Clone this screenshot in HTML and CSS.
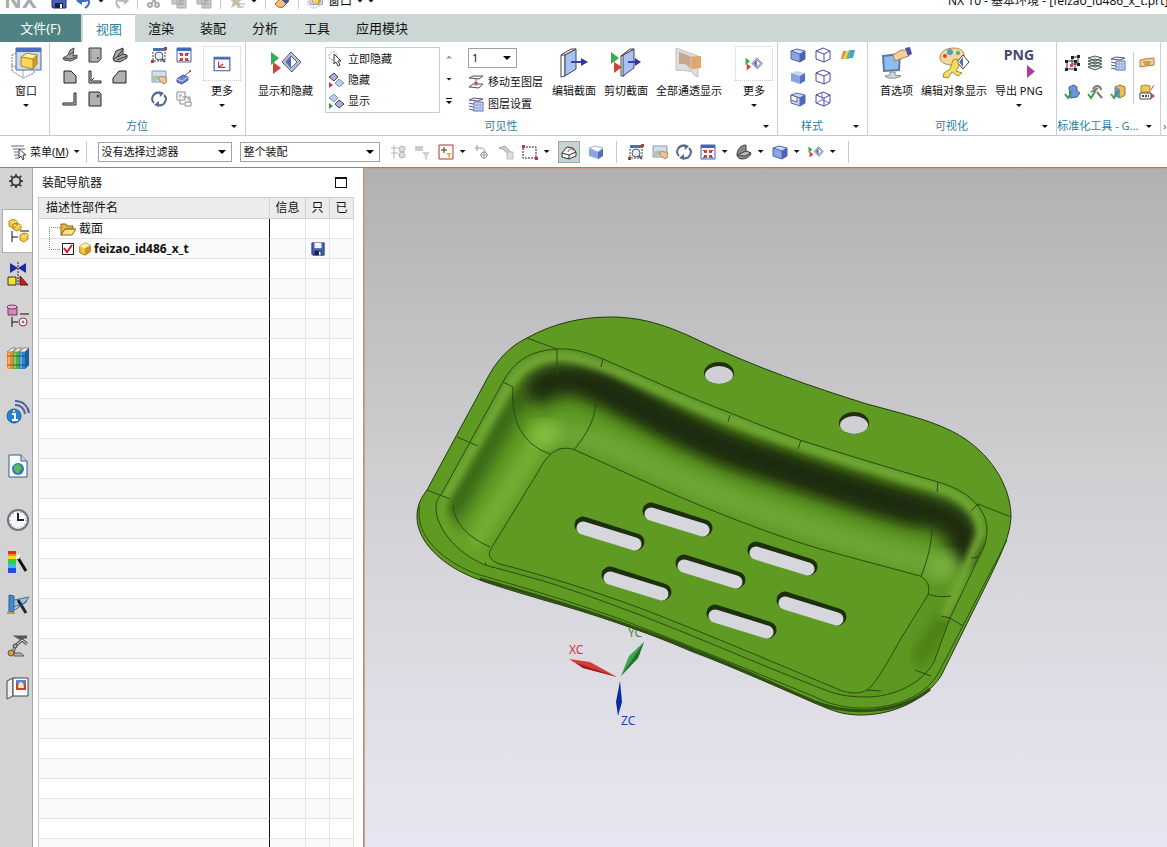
FILE: index.html
```html
<!DOCTYPE html>
<html lang="zh-CN">
<head>
    <meta charset="UTF-8">
    <meta name="viewport" content="width=device-width, initial-scale=1.0">
    <title>NX 10 - 基本环境</title>
    <link rel="stylesheet" href="styles.css">
</head>
<body>
    <svg class="sprite" aria-hidden="true">
        <symbol id="save" viewBox="0 0 16 16"><path d="M1 1h14v14H2l-1-1z" fill="#4a62b8" stroke="#1c2c6c"/><path d="M4 1h8v6H4z" fill="#f4f6ff"/><path d="M4 10h8v5H4z" fill="#15204c"/><path d="M9 11h2v4H9z" fill="#fff"/></symbol>
        <symbol id="undo" viewBox="0 0 16 16"><path d="M3 8h6c6-3 5 4 0 7" fill="none" stroke="#3c6cc8" stroke-width="2"/><path d="M0 8l6-5v9z" fill="#3c6cc8"/></symbol>
        <symbol id="redo" viewBox="0 0 16 16"><path d="M14 8H8C2 5 2 12 7 15" fill="none" stroke="#b8b8b8" stroke-width="2"/><path d="M16 8l-5-5v9z" fill="#b8b8b8"/></symbol>
        <symbol id="cut" viewBox="0 0 16 16"><path d="M5 1l5 9M12 1L6 10" stroke="#aaa" stroke-width="2"/><g fill="none" stroke="#aaa" stroke-width="2"><circle cx="4" cy="12" r="2"/><circle cx="11" cy="12" r="2"/></g></symbol>
        <symbol id="copy" viewBox="0 0 16 16"><path d="M1 1h8v10H1zM6 5h9v10H6z" fill="#c8c8c8" stroke="#aaa"/><path d="M8 8h5M8 11h5" stroke="#999"/></symbol>
        <symbol id="star" viewBox="0 0 16 16"><path d="M7 1l2 5h5l-4 3 2 6-5-3-5 3 2-6-4-3h5z" fill="#c4c0a8"/><path d="M8 11h8M8 14h7" stroke="#aaa"/></symbol>
        <symbol id="brush" viewBox="0 0 16 16"><path d="M1 11l8-8 6 5-6 6c-3 1-6 0-8-3z" fill="#efc46c" stroke="#8a6230"/><path d="M10 3l5 5-3 3-5-5z" fill="#4a4c9c"/></symbol>
        <symbol id="win" viewBox="0 0 32 32"><path d="M2 8l8-4 14 1v21l-11 5-11-7z" fill="#fff" stroke="#777" stroke-dasharray="2 1"/><path d="M1 18l12 5 12-4M13 23v8" stroke="#aaa" fill="none"/><path d="M6 1h25v22H6z" fill="#c9dcf6" stroke="#4967ac"/><path d="M6 1h25v4H6z" fill="#4a70bd"/><path d="M11 10l6-4 10 2-4 4z" fill="#fff2a0"/><path d="M11 10l12 2v10l-12-3z" fill="#f9d65e"/><path d="M23 12l4-4v9l-4 5z" fill="#d59c28"/><path d="M11 10l6-4 10 2v9l-4 5-12-3zM11 10l12 2 4-4M23 12v10" stroke="#b0821c" fill="none"/></symbol>
        <symbol id="iso" viewBox="0 0 16 16"><path d="M1 11l5-3 2-5 4-2-1 8 4-1v3l-6 3-7-1z" fill="#a8a8a8" stroke="#444"/><path d="M2 11l6 1 6-2M7 8l4-3" stroke="#444" fill="none"/></symbol>
        <symbol id="top" viewBox="0 0 16 16"><path d="M2 1h12v11l-3 3H2z" fill="#b4b4b4" stroke="#333"/><circle cx="11" cy="11" r="1" fill="#333"/><path d="M4 2v12" stroke="#888"/></symbol>
        <symbol id="iso2" viewBox="0 0 16 16"><path d="M1 11l3-7 7-3v6l4 1v3l-7 4-6-1z" fill="#a8a8a8" stroke="#333"/><path d="M11 2L6 9l-4 3M6 10l5-3M5 13l10-4" stroke="#333" fill="none"/></symbol>
        <symbol id="front" viewBox="0 0 16 16"><path d="M2 2h7l5 5v7H2z" fill="#b0b0b0" stroke="#222"/></symbol>
        <symbol id="left" viewBox="0 0 16 16"><path d="M2 2h2v10h10v2H2z" fill="#ccc" stroke="#222"/><path d="M5 11l2-2" stroke="#222"/></symbol>
        <symbol id="back" viewBox="0 0 16 16"><path d="M7 2h7v12H1V9z" fill="#b0b0b0" stroke="#222"/></symbol>
        <symbol id="right" viewBox="0 0 16 16"><path d="M12 2h2v12H1v-2h11z" fill="#ccc" stroke="#222"/></symbol>
        <symbol id="bottom" viewBox="0 0 16 16"><path d="M2 1h10l2 2v12H2z" fill="#b0b0b0" stroke="#222"/><circle cx="11" cy="5" r="1" fill="#eee" stroke="#222"/></symbol>
        <symbol id="fit" viewBox="0 0 16 16"><path d="M2 1h13v3H2z" fill="#4870bd"/><path d="M2 5v10M14 5v9M3 14h10" stroke="#444" stroke-dasharray="2 1" fill="none"/><circle cx="8" cy="9" r="4" fill="#e6f1fb" stroke="#556"/><path d="M11 12l3 3" stroke="#556" stroke-width="2"/><path d="M0 13h3v3H0zM13 0h3v3h-3z" fill="#b83a36"/></symbol>
        <symbol id="tile" viewBox="0 0 16 16"><path d="M1 1h14v14H1z" fill="#f4f6ff" stroke="#4864a8"/><path d="M1 1h14v3H1z" fill="#4468b8"/><path d="M4 6h3v3H4zM9 6h3v3H9zM4 11h3v3H4zM9 11h3v3H9z" fill="#d24a44"/><path d="M3 6l2 2M13 6l-2 2M3 14l2-2M13 14l-2-2" stroke="#a22"/></symbol>
        <symbol id="pan" viewBox="0 0 16 16"><path d="M1 2h14v11H1z" fill="#cfe0f2" stroke="#8c9aad"/><path d="M1 8l5-2 4 3-5 3H1z" fill="#b0c6a8"/><path d="M8 8l2-1 2 1 3 0 1 5-3 2-5-4z" fill="#edc497" stroke="#b58957"/></symbol>
        <symbol id="persp" viewBox="0 0 16 16"><path d="M1 10l6-4 5 2v3l-6 4-5-2z" fill="#6d86d4" stroke="#3a4c98"/><path d="M1 10l5 2 6-4" stroke="#c0d0f8" fill="none"/><path d="M9 6l6-4" stroke="#667"/><circle cx="14" cy="2" r="1" fill="#c33"/></symbol>
        <symbol id="rotate" viewBox="0 0 16 16"><path d="M3 12A6 6 0 0 1 9 2M13 4A6 6 0 0 1 7 14" fill="none" stroke="#56688c" stroke-width="2"/><path d="M8 0l5 2-4 4zM8 10l-5 4 5 2z" fill="#56688c"/></symbol>
        <symbol id="copyview" viewBox="0 0 16 16"><path d="M1 1h8v8H1zM4 9v4h4M9 11h6v4H9zM6 6h8v5" fill="none" stroke="#888"/><path d="M3 4h3M3 6h2M11 8h3" stroke="#88a"/></symbol>
        <symbol id="axes" viewBox="0 0 16 16"><path d="M1 2h14v12H1z" fill="#f7f9ff" stroke="#46598f"/><path d="M1 2h14v2H1z" fill="#496bb5"/><path d="M5 6v5h6M5 11l4-3" fill="none" stroke="#c23430"/></symbol>
        <symbol id="showhide" viewBox="0 0 32 32"><path d="M1 5l8 6-8 7z" fill="#35ad4d"/><path d="M3 15l8 6-8 6z" fill="#d04438"/><path d="M21 5l10 10-9 10-10-10z" fill="#b4bed8" stroke="#555e78"/><path d="M21 9l6 6-6 6-5-6z" fill="#fff" stroke="#667"/><path d="M21 9v12l-5-6z" fill="#5668b5"/></symbol>
        <symbol id="hidenow" viewBox="0 0 16 16"><circle cx="5" cy="5" r="4" fill="none" stroke="#999" stroke-dasharray="2 1"/><path d="M6 3v10l2-2 2 4 2-1-2-4h3z" fill="#fff" stroke="#333"/></symbol>
        <symbol id="hide" viewBox="0 0 16 16"><path d="M6 1l4 4-4 4-5-4z" fill="#aab2dc" stroke="#33406c"/><path d="M11 7l5 4-5 4-4-4z" fill="#b8ccee" stroke="#7890c0"/><path d="M1 10l4 3-4 3z" fill="#c33"/></symbol>
        <symbol id="show" viewBox="0 0 16 16"><path d="M6 1l4 4-4 4-5-4z" fill="#b8ccee" stroke="#7890c0"/><path d="M11 7l5 4-5 4-4-4z" fill="#aab2dc" stroke="#33406c"/><path d="M1 10l4 3-4 3z" fill="#2c9c44"/></symbol>
        <symbol id="movelayer" viewBox="0 0 16 16"><path d="M1 4l4-2h10l-4 3zM1 13l4-3h10l-4 4z" fill="#e8f0e4" stroke="#557"/><path d="M8 5v6" stroke="#c44"/><path d="M6 8h4l-2 4z" fill="#c44"/></symbol>
        <symbol id="layers" viewBox="0 0 16 16"><path d="M1 4l5-2 9 1-5 2zM1 7l4 1h10M1 10l4 1h10M1 13l4 1h10" fill="#eef2f8" stroke="#557"/><path d="M6 6h9v9H6z" fill="#dce4fa" stroke="#5a6cb4"/><path d="M6 9h9M6 12h9M9 6v9M12 6v9" stroke="#8a9cd4"/></symbol>
        <symbol id="layers2" viewBox="0 0 16 16"><path d="M1 12l7-2 7 2-7 3zM1 9l7-2 7 2-7 3zM1 6l7-2 7 2-7 3zM1 3l7-2 7 2-7 3z" fill="#e4efe6" stroke="#4a555a"/></symbol>
        <symbol id="section" viewBox="0 0 32 32"><path d="M3 8l4-1v22l-4 1z" fill="#fff" stroke="#444"/><path d="M7 8L18 2v20L7 29z" fill="#a9c2f2" stroke="#3c4868"/><path d="M3 8l10-6h5L7 8z" fill="#eee" stroke="#444"/><path d="M13 15h12" stroke="#3b3fa8" stroke-width="2"/><path d="M23 11l7 4-7 4z" fill="#3434a4"/></symbol>
        <symbol id="clip" viewBox="0 0 32 32"><path d="M11 9l3-1v21h-3z" fill="#fff" stroke="#444"/><path d="M13 8L24 2v19L13 29z" fill="#a9c2f2" stroke="#3c4868"/><path d="M11 9l9-7h4L13 8z" fill="#eee" stroke="#444"/><path d="M18 15h8" stroke="#3b3fa8" stroke-width="2"/><path d="M25 11l6 4-6 4z" fill="#3434a4"/><path d="M1 5l8 6-8 6z" fill="#35ad4d"/><path d="M4 15l8 5-8 6z" fill="#d04438"/></symbol>
        <symbol id="through" viewBox="0 0 32 32"><path d="M3 1l22 8v21l-4-2-3-4-15-1z" fill="#dedede" stroke="#c2c2c2"/><path d="M6 5l8 5 14-1v12l-10 1-6-5H6z" fill="#e1a66b"/><path d="M6 5l11 4v9l-5-1H6z" fill="#c9a88a"/><path d="M3 23l15 1V11" fill="none" stroke="#c8c8c8"/></symbol>
        <symbol id="cube" viewBox="0 0 16 16"><path d="M1 4l6-2 8 2-5 3z" fill="#ccdcfb"/><path d="M1 4l9 3v8l-9-3z" fill="#8ba6e6"/><path d="M10 7l5-3v8l-5 3z" fill="#4a63b4"/><path d="M1 4l6-2 8 2v8l-5 3-9-3zM1 4l9 3 5-3M10 7v8" fill="none" stroke="#5465a8"/></symbol>
        <symbol id="cubesoft" viewBox="0 0 16 16"><path d="M1 4l6-2 8 2-5 3z" fill="#c8d6f5"/><path d="M1 4l9 3v8l-9-3z" fill="#8aa2e0"/><path d="M10 7l5-3v8l-5 3z" fill="#556fc0"/></symbol>
        <symbol id="cubehalf" viewBox="0 0 16 16"><path d="M1 4l6-2 8 2v8l-5 3-9-3z" fill="#c4d4f4" stroke="#5e6c94"/><path d="M1 4l9 3 5-3M10 7v8" fill="none" stroke="#55659a"/><path d="M10 7l5-3v8l-5 3z" fill="#4a68bc"/><path d="M1 4l6 2v5l-6-2z" fill="#fff" stroke="#668"/></symbol>
        <symbol id="wire" viewBox="0 0 16 16"><path d="M1 4l7-3 7 3v8l-6 3-8-3zM1 4l8 3 6-3M9 7v8" fill="#fff" stroke="#4848a4"/></symbol>
        <symbol id="wire2" viewBox="0 0 16 16"><path d="M1 4l7-3 7 3v8l-6 3-8-3zM1 4l8 3 6-3M9 7v8" fill="#fff" stroke="#4848a4"/><path d="M1 12l6-3 8 3M7 2v7" fill="none" stroke="#7878c4"/></symbol>
        <symbol id="rainbow" viewBox="0 0 16 16"><path d="M3 4h4L4 12H1z" fill="#e58a35"/><path d="M6 4h3l-3 8H3z" fill="#ecd44a"/><path d="M9 3h3L9 12H6z" fill="#5cc06c"/><path d="M11 3h4l-2 8H9z" fill="#4a9ee0"/></symbol>
        <symbol id="prefs" viewBox="0 0 32 32"><path d="M2 9l17-2-1 16-15 1z" fill="#8cbcf0" stroke="#6078a4" stroke-width="2"/><path d="M9 25h5v3l6 1-5 2-8 0-3-2 5-1z" fill="#d5d8dc" stroke="#888"/><path d="M12 8l8-5 6 0 2 6-6 2-8 3z" fill="#f1d19a" stroke="#a88452"/><path d="M24 1l5-1 2 7-4 2z" fill="#4c50ac"/></symbol>
        <symbol id="palette" viewBox="0 0 32 32"><path d="M2 11C2 4 9 1 16 1s11 4 10 9c-1 4-5 2-6 5s-4 4-8 3C6 17 2 15 2 11z" fill="#f5d69c" stroke="#a88a55"/><circle cx="7" cy="9" r="2" fill="#d84c44"/><circle cx="12" cy="5" r="3" fill="#48a0d8"/><circle cx="20" cy="6" r="2" fill="#50b058"/><path d="M25 8l6 7-6 7-6-7z" fill="#fff" stroke="#445"/><path d="M25 10v10l-4-5z" fill="#5668b5"/><path d="M19 12l2 7-3 5 6 2-4 3-6-4-4 6-5-1 1-4 6-4 3-9z" fill="#f2dc61" stroke="#a38e34"/></symbol>
        <symbol id="snap" viewBox="0 0 16 16"><path d="M3 6h8v8H3zM8 2h6v7H8z" fill="none" stroke="#333"/><path d="M1 5h3v3H1zM1 13h3v3H1zM10 13h3v3h-3zM7 1h3v3H7zM13 0h3v3h-3zM13 8h3v3h-3zM10 5h3v3h-3z" fill="#222"/><path d="M6 9h3v3H6z" fill="#d44"/></symbol>
        <symbol id="note" viewBox="0 0 16 16"><path d="M1 5l5-1 9-1v7l-8 1-6 1z" fill="#f3cf94" stroke="#b07c3e"/><path d="M4 7h8M5 9h6" stroke="#a36a3a"/></symbol>
        <symbol id="chkcube" viewBox="0 0 16 16"><path d="M5 3l5-2 3 2v4l3 2-3 4-7 1z" fill="#6f95dc" stroke="#3c5ca4"/><path d="M1 10l3 4 4-7" fill="none" stroke="#38a048" stroke-width="2"/></symbol>
        <symbol id="chkarc" viewBox="0 0 16 16"><path d="M6 5c3-5 8-3 8 1M4 8l7-4M10 8l5 6" fill="none" stroke="#777" stroke-width="2"/><path d="M1 10l3 4 5-8" fill="none" stroke="#38a048" stroke-width="2"/></symbol>
        <symbol id="chkbox" viewBox="0 0 16 16"><path d="M5 3l5-2 5 2v8l-5 3-5-2z" fill="#f0bc52" stroke="#9b7428"/><path d="M5 3l5 2v9l-5-2z" fill="#678cd8"/><path d="M1 10l3 4 4-7" fill="none" stroke="#38a048" stroke-width="2"/></symbol>
        <symbol id="plot" viewBox="0 0 16 16"><path d="M2 2l4-1 5 1v6H2z" fill="#f3cb52" stroke="#a38434"/><path d="M1 9h11v6H1z" fill="#fff" stroke="#444"/><path d="M3 12h7" stroke="#444" stroke-width="2" stroke-dasharray="2 1"/><path d="M12 9l4 3-4 3z" fill="#b43ca0"/><path d="M15 1l-3 5" stroke="#a76a34"/></symbol>
        <symbol id="menu" viewBox="0 0 16 16"><path d="M1 2h13M3 5h12M4 8h5M4 11h5M5 14h4" stroke="#667" stroke-width="1"/><path d="M9 5v9l2-2 2 4 1-1-1-4h3z" fill="#fff" stroke="#444"/></symbol>
        <symbol id="g1" viewBox="0 0 16 16"><path d="M4 1v14M1 4h7M1 9h7" stroke="#b4b4b4"/><circle cx="12" cy="5" r="3" fill="#ddd" stroke="#b4b4b4"/><circle cx="12" cy="11" r="3" fill="#ddd" stroke="#b4b4b4"/></symbol>
        <symbol id="g2" viewBox="0 0 16 16"><path d="M1 2h8v5H1z" fill="#ccc"/><path d="M8 8h8l-3 4v4l-2-1v-3z" fill="#d8d0c4"/></symbol>
        <symbol id="g3" viewBox="0 0 16 16"><path d="M1 4h6c4 0 4 3 4 5M3 1v6M10 7v8M6 11h8" fill="none" stroke="#999"/><circle cx="10" cy="11" r="3" fill="none" stroke="#999"/></symbol>
        <symbol id="g4" viewBox="0 0 16 16"><path d="M1 4l6-2 5 5-2 3-4-4z" fill="#ccc" stroke="#aaa"/><path d="M9 8h6v7H9z" fill="#ddd" stroke="#bbb"/></symbol>
        <symbol id="pick" viewBox="0 0 16 16"><path d="M1 1h14v14H1z" fill="#fffaf4" stroke="#a33a3a"/><path d="M3 6h6M6 3v6" stroke="#333"/><path d="M8 9h6l-2 2v3l-2-1v-2z" fill="#efb250"/></symbol>
        <symbol id="marquee" viewBox="0 0 16 16"><path d="M1 3h13v11H1z" fill="none" stroke="#222" stroke-dasharray="2 1"/><path d="M0 1h3v3H0zM13 13h3v3h-3z" fill="#c33"/></symbol>
        <symbol id="edge" viewBox="0 0 16 16"><path d="M1 9l5-6 6 1 3 4v4l-7 3-7-2z" fill="#f6f6f6" stroke="#333"/><path d="M1 9l7 2 7-3M8 11v4" stroke="#333" fill="none"/><path d="M7 8c1-3 3-4 6-2" fill="none" stroke="#c33"/></symbol>
        <symbol id="sheet" viewBox="0 0 16 16"><path d="M1 4l6-2 8 2v8l-5 3-9-3z" fill="#8ba6e6"/><path d="M10 7l5-3v8l-5 3z" fill="#556fc0"/><path d="M1 4l6-2 8 2-5 4z" fill="#fff" stroke="#a4b4dc"/></symbol>
        <symbol id="pie" viewBox="0 0 16 16"><path d="M1 11C1 5 5 1 10 1v6l5 2c-1 4-5 6-9 6-3 0-5-2-5-4z" fill="#888" stroke="#444"/><path d="M1 11l9-4 5 2-6 3z" fill="#bbb" stroke="#444"/></symbol>
        <symbol id="gear" viewBox="0 0 16 16"><circle cx="8" cy="8" r="5" fill="none" stroke="#333" stroke-width="2"/><path d="M8 0v3M8 13v3M0 8h3M13 8h3M2 2l2 2M12 12l2 2M14 2l-2 2M2 14l2-2" stroke="#333" stroke-width="2"/></symbol>
        <symbol id="tree" viewBox="0 0 24 24"><path d="M5 12v11M5 18h6M13 12h9" stroke="#111"/><g fill="#f4c742" stroke="#b5861c"><path d="M2 2l4-2 4 2v5l-4 2-4-2zM6 5l4-1 4 2v4l-4 2-4-2zM13 16l4-2 4 1v5l-4 3-4-2z"/></g><path d="M3 2l3 2 4-2M7 6l3 2 4-2M14 17l3 1 4-3" stroke="#fff0a0" fill="none"/></symbol>
        <symbol id="constraint" viewBox="0 0 24 24"><path d="M4 1l8 5-8 5zM20 1l-8 5 8 5z" fill="#1c2ca4"/><path d="M12 0v24" stroke="#222" stroke-dasharray="2 1"/><path d="M2 15h8v8H2z" fill="#f8e02c" stroke="#333"/><path d="M14 14l8 9h-8z" fill="#c42020" stroke="#611"/></symbol>
        <symbol id="reuse" viewBox="0 0 24 24"><path d="M2 3h9v8H2z" fill="#d28ab8" stroke="#73335c"/><ellipse cx="6" cy="3" rx="5" ry="2" fill="#eab8d8" stroke="#73335c"/><path d="M6 13v10M6 18h6M14 10h9" stroke="#111"/><circle cx="17" cy="18" r="4" fill="#fff" stroke="#83285c"/><circle cx="17" cy="18" r="1" fill="none" stroke="#83285c"/></symbol>
        <symbol id="books" viewBox="0 0 24 24"><path d="M1 6l5-4h4L6 6zM7 6l5-4h4l-4 4zM13 6l5-4h5l-4 4z" fill="#f4f0d8" stroke="#887"/><path d="M1 6h6v17H2l-1-1z" fill="#f0872c"/><path d="M7 6h6v17H7z" fill="#4cb43e"/><path d="M13 6h6l4-4v17l-4 4h-6z" fill="#2f84d4"/><path d="M19 6l4-4v17l-4 4z" fill="#1f5c9c"/><path d="M3 7v15M9 7v15M15 7v15" stroke="#fff" opacity=".6"/><path d="M1 10h6M1 19h6" stroke="#a44e10"/><path d="M7 10h6M7 19h6" stroke="#246c1c"/><path d="M13 10h6M13 19h6" stroke="#124a84"/></symbol>
        <symbol id="info" viewBox="0 0 24 24"><path d="M9 5c6 0 9 3 10 9M9 1c8 0 13 5 14 12" fill="none" stroke="#4c619a" stroke-width="2"/><circle cx="8" cy="16" r="7" fill="#2184d4" stroke="#1c5a98"/><path d="M6 14h3v6M6 20h6" fill="none" stroke="#fff" stroke-width="2"/><circle cx="8" cy="11" r="1" fill="#fff"/></symbol>
        <symbol id="web" viewBox="0 0 24 24"><path d="M3 1h12l6 6v16H3z" fill="#f8fbff" stroke="#3f5a86"/><path d="M15 1v6h6" fill="#c8d8ec" stroke="#3f5a86"/><circle cx="12" cy="15" r="6" fill="#3a72b8"/><path d="M8 11l5-1 3 4-4 6-4-4z" fill="#58b860"/></symbol>
        <symbol id="clock" viewBox="0 0 24 24"><circle cx="12" cy="12" r="10" fill="#f6f8fa" stroke="#6c747c" stroke-width="2"/><circle cx="12" cy="12" r="8" fill="none" stroke="#777" stroke-dasharray="1 3"/><path d="M12 5v7h6" fill="none" stroke="#222" stroke-width="2"/></symbol>
        <symbol id="colors" viewBox="0 0 24 24"><path d="M2 1h8v4H2z" fill="#e62a20"/><path d="M2 4h8v2H2z" fill="#f08c28"/><path d="M2 6h8v3H2z" fill="#f4d82a"/><path d="M2 9h8v5H2z" fill="#38cc38"/><path d="M2 14h8v4H2z" fill="#2bc4dc"/><path d="M2 18h8v5H2z" fill="#2c48d8"/><path d="M12 8l8 13" stroke="#111" stroke-width="3"/><path d="M11 5l3-1-1 5-3 0z" fill="#fff"/></symbol>
        <symbol id="wing" viewBox="0 0 24 24"><path d="M3 3l5 1v15l-5 2z" fill="#468bc8" stroke="#2d5f90"/><path d="M8 8l15-3-4 6-11 4z" fill="#9fc1df" stroke="#4c7095"/><path d="M1 21h8" stroke="#b49c48" stroke-width="2"/><path d="M12 8l8 13" stroke="#182838" stroke-width="3"/><path d="M21 9L9 18" stroke="#35506c"/></symbol>
        <symbol id="robot" viewBox="0 0 24 24"><path d="M7 19l2-7 7-6 5 4M17 6l-5-3h9" fill="none" stroke="#555" stroke-width="3"/><path d="M7 19l2-7 7-6 5 4" fill="none" stroke="#e4e4e4"/><path d="M8 22h10l-3-3H8z" fill="#bbb" stroke="#555"/><circle cx="5" cy="19" r="3" fill="#e9983a" stroke="#555"/><circle cx="9" cy="12" r="2" fill="#aaa" stroke="#444"/></symbol>
        <symbol id="roles" viewBox="0 0 24 24"><path d="M1 5l6-3v18l-6 3z" fill="#eee" stroke="#444"/><path d="M7 2h15v18H7z" fill="#fff" stroke="#444"/><path d="M10 4h10v10H10z" fill="#4f8cd8"/><path d="M10 14V6l4 5h2l4-5v8z" fill="#d83c30"/><path d="M12 12c0-8 6-8 6 0z" fill="#f6e9a8"/></symbol>
        <symbol id="folder" viewBox="0 0 16 16"><path d="M1 3h5l1 2h6v3H5l-3 6H1z" fill="#eab43e" stroke="#8b6414"/><path d="M5 8h11l-4 6H1z" fill="#ffe084" stroke="#8b6414"/></symbol>
        <symbol id="part" viewBox="0 0 16 16"><path d="M2 5l6-4 6 3v7l-6 4-6-3z" fill="#f4c640" stroke="#8c6418"/><path d="M2 5l6-4 6 3-6 3z" fill="#fff0a8"/><path d="M8 7l6-3v7l-6 4z" fill="#cf9428"/></symbol>
    </svg>

    <header class="titlebar">
        <span class="logo">NX</span>
        <button class="quick" aria-label="保存"><svg><use href="#save"/></svg></button>
        <button class="quick" aria-label="撤消"><svg><use href="#undo"/></svg><i class="caret"></i></button>
        <button class="quick" aria-label="重做"><svg><use href="#redo"/></svg></button>
        <span class="quick-sep"></span>
        <button class="quick" aria-label="剪切"><svg><use href="#cut"/></svg></button>
        <button class="quick" aria-label="复制"><svg><use href="#copy"/></svg></button>
        <button class="quick" aria-label="粘贴"><svg><use href="#copy"/></svg></button>
        <span class="quick-sep"></span>
        <button class="quick" aria-label="重复命令"><svg><use href="#star"/></svg><i class="caret"></i></button>
        <span class="quick-sep"></span>
        <button class="quick" aria-label="画笔"><svg><use href="#brush"/></svg></button>
        <span class="quick-sep"></span>
        <button class="quick quick-window"><svg><use href="#win"/></svg>窗口<i class="caret"></i><i class="caret"></i></button>
        <span class="doc-title">NX 10 - 基本环境 - [feizao_id486_x_t.prt]</span>
    </header>

    <nav class="tabs">
        <button class="tab file">文件(F)</button>
        <button class="tab active">视图</button>
        <button class="tab">渲染</button>
        <button class="tab">装配</button>
        <button class="tab">分析</button>
        <button class="tab">工具</button>
        <button class="tab">应用模块</button>
    </nav>

    <section class="ribbon">
        <div class="group group-window">
            <div class="group-body">
                <button class="big"><svg><use href="#win"/></svg>窗口<i class="caret"></i></button>
            </div>
        </div>

        <div class="group group-orient">
            <div class="group-body">
                <div class="icon-grid three">
                    <button aria-label="正三轴测图"><svg><use href="#iso"/></svg></button>
                    <button aria-label="俯视图"><svg><use href="#top"/></svg></button>
                    <button aria-label="正等测图"><svg><use href="#iso2"/></svg></button>
                    <button aria-label="前视图"><svg><use href="#front"/></svg></button>
                    <button aria-label="左视图"><svg><use href="#left"/></svg></button>
                    <button aria-label="后视图"><svg><use href="#back"/></svg></button>
                    <button aria-label="右视图"><svg><use href="#right"/></svg></button>
                    <button aria-label="仰视图"><svg><use href="#bottom"/></svg></button>
                </div>
                <div class="icon-grid two">
                    <button aria-label="缩放"><svg><use href="#fit"/></svg></button>
                    <button aria-label="适合窗口"><svg><use href="#tile"/></svg></button>
                    <button aria-label="平移"><svg><use href="#pan"/></svg></button>
                    <button aria-label="透视"><svg><use href="#persp"/></svg></button>
                    <button aria-label="旋转"><svg><use href="#rotate"/></svg></button>
                    <button aria-label="另存视图"><svg><use href="#copyview"/></svg></button>
                </div>
                <button class="big more"><span class="more-box"><svg><use href="#axes"/></svg></span>更多<i class="caret"></i></button>
            </div>
            <div class="group-title"><span>方位</span><button aria-label="方位选项"><i class="caret"></i></button></div>
        </div>

        <div class="group group-visible">
            <div class="group-body">
                <button class="big"><svg><use href="#showhide"/></svg>显示和隐藏</button>
                <div class="gallery">
                    <button><svg><use href="#hidenow"/></svg>立即隐藏</button>
                    <button><svg><use href="#hide"/></svg>隐藏</button>
                    <button><svg><use href="#show"/></svg>显示</button>
                </div>
                <div class="gallery-scroll">
                    <button aria-label="向上"><i class="caret up"></i></button>
                    <button aria-label="向下"><i class="caret"></i></button>
                    <button aria-label="展开"><i class="caret bar"></i></button>
                </div>
                <div class="layer-tools">
                    <select aria-label="工作图层"><option>1</option></select>
                    <button><svg><use href="#movelayer"/></svg>移动至图层</button>
                    <button><svg><use href="#layers"/></svg>图层设置</button>
                </div>
                <button class="big"><svg><use href="#section"/></svg>编辑截面</button>
                <button class="big"><svg><use href="#clip"/></svg>剪切截面</button>
                <button class="big"><svg><use href="#through"/></svg>全部通透显示</button>
                <button class="big more"><span class="more-box"><svg><use href="#showhide"/></svg></span>更多<i class="caret"></i></button>
            </div>
            <div class="group-title"><span>可见性</span><button aria-label="可见性选项"><i class="caret"></i></button></div>
        </div>

        <div class="group group-style">
            <div class="group-body">
                <div class="icon-grid three">
                    <button aria-label="带边着色"><svg><use href="#cube"/></svg></button>
                    <button aria-label="消隐线框"><svg><use href="#wire"/></svg></button>
                    <button aria-label="面分析"><svg><use href="#rainbow"/></svg></button>
                    <button aria-label="着色"><svg><use href="#cubesoft"/></svg></button>
                    <button aria-label="隐藏边"><svg><use href="#wire"/></svg></button>
                    <span></span>
                    <button aria-label="局部着色"><svg><use href="#cubehalf"/></svg></button>
                    <button aria-label="静态线框"><svg><use href="#wire2"/></svg></button>
                </div>
            </div>
            <div class="group-title"><span>样式</span><button aria-label="样式选项"><i class="caret"></i></button></div>
        </div>

        <div class="group group-visual">
            <div class="group-body">
                <button class="big"><svg><use href="#prefs"/></svg>首选项</button>
                <button class="big"><svg><use href="#palette"/></svg>编辑对象显示</button>
                <button class="big"><span class="png">PNG<i></i></span>导出 PNG<i class="caret"></i></button>
            </div>
            <div class="group-title"><span>可视化</span><button aria-label="可视化选项"><i class="caret"></i></button></div>
        </div>

        <div class="group group-std">
            <div class="group-body">
                <div class="std-grid">
                    <button aria-label="捕捉"><svg><use href="#snap"/></svg></button>
                    <button aria-label="图层"><svg><use href="#layers2"/></svg></button>
                    <button aria-label="图层类别"><svg><use href="#layers"/></svg></button>
                    <button aria-label="检查模型"><svg><use href="#chkcube"/></svg></button>
                    <button aria-label="检查曲线"><svg><use href="#chkarc"/></svg></button>
                    <button aria-label="检查部件"><svg><use href="#chkbox"/></svg></button>
                </div>
                <div class="std-grid single">
                    <button aria-label="注释"><svg><use href="#note"/></svg></button>
                    <button aria-label="输出"><svg><use href="#plot"/></svg></button>
                </div>
            </div>
            <div class="group-title"><span>标准化工具 - G...</span><button aria-label="标准化工具选项"><i class="caret"></i></button></div>
        </div>
        <div class="group group-rest">
            <div class="group-body"></div>
            <div class="group-title">›</div>
        </div>
    </section>

    <section class="toolbar">
        <button class="menu-button"><svg><use href="#menu"/></svg>菜单(<u>M</u>)<i class="caret"></i></button>
        <span class="sep"></span>
        <select class="filter" aria-label="选择过滤器"><option>没有选择过滤器</option></select>
        <select class="scope" aria-label="选择范围"><option>整个装配</option></select>
        <div class="tools">
            <button aria-label="类选择"><svg><use href="#g1"/></svg></button>
            <button aria-label="过滤"><svg><use href="#g2"/></svg></button>
            <button aria-label="选择优先级"><svg><use href="#pick"/></svg><i class="caret"></i></button>
            <button aria-label="恢复"><svg><use href="#g3"/></svg></button>
            <button aria-label="取消选择"><svg><use href="#g4"/></svg></button>
            <button aria-label="矩形选择"><svg><use href="#marquee"/></svg><i class="caret"></i></button>
            <button class="pressed" aria-label="高亮隐藏边"><svg><use href="#edge"/></svg></button>
            <button aria-label="透明"><svg><use href="#sheet"/></svg></button>
            <span class="sep"></span>
            <button aria-label="缩放"><svg><use href="#fit"/></svg></button>
            <button aria-label="平移"><svg><use href="#pan"/></svg></button>
            <button aria-label="旋转"><svg><use href="#rotate"/></svg></button>
            <button aria-label="适合窗口"><svg><use href="#tile"/></svg><i class="caret"></i></button>
            <button aria-label="定向视图"><svg><use href="#pie"/></svg><i class="caret"></i></button>
            <button aria-label="渲染样式"><svg><use href="#cube"/></svg><i class="caret"></i></button>
            <button aria-label="显示和隐藏"><svg><use href="#showhide"/></svg><i class="caret"></i></button>
            <span class="sep"></span>
        </div>
    </section>

    <main class="workspace">
        <nav class="sidebar">
            <button class="settings" aria-label="资源条选项"><svg><use href="#gear"/></svg></button>
            <button class="current" aria-label="装配导航器"><svg><use href="#tree"/></svg></button>
            <button aria-label="约束导航器"><svg><use href="#constraint"/></svg></button>
            <button aria-label="部件导航器"><svg><use href="#reuse"/></svg></button>
            <button aria-label="重用库"><svg><use href="#books"/></svg></button>
            <button class="spaced" aria-label="HD3D 工具"><svg><use href="#info"/></svg></button>
            <button class="spaced" aria-label="Web 浏览器"><svg><use href="#web"/></svg></button>
            <button class="spaced" aria-label="历史记录"><svg><use href="#clock"/></svg></button>
            <button aria-label="系统材料"><svg><use href="#colors"/></svg></button>
            <button aria-label="加工向导"><svg><use href="#wing"/></svg></button>
            <button aria-label="机器人"><svg><use href="#robot"/></svg></button>
            <button aria-label="角色"><svg><use href="#roles"/></svg></button>
        </nav>

        <aside class="navigator">
            <div class="navigator-title">装配导航器<button aria-label="最大化"></button></div>
            <div class="table-wrap">
                <table>
                    <colgroup><col><col class="c-info"><col class="c-flag"><col class="c-flag"></colgroup>
                    <thead>
                        <tr><th>描述性部件名</th><th>信息</th><th>只</th><th>已</th></tr>
                    </thead>
                    <tbody id="parts">
                        <tr>
                            <td><div class="node section-node"><svg><use href="#folder"/></svg>截面</div></td>
                            <td></td><td></td><td></td>
                        </tr>
                        <tr>
                            <td><div class="node part-node"><input type="checkbox" id="part1" checked><svg><use href="#part"/></svg><label for="part1">feizao_id486_x_t</label></div></td>
                            <td></td><td class="flag"><svg><use href="#save"/></svg></td><td></td>
                        </tr>
                    </tbody>
                </table>
            </div>
        </aside>

        <div class="viewport">
            <svg viewBox="365 169 802 678" preserveAspectRatio="xMinYMin slice" role="img" aria-label="feizao_id486_x_t">
                <defs>
                    <filter id="soft" x="-20%" y="-20%" width="140%" height="140%"><feGaussianBlur stdDeviation="8"/></filter>
                    <filter id="fine" x="-20%" y="-20%" width="140%" height="140%"><feGaussianBlur stdDeviation="3"/></filter>
                    <path id="rim" d="M557 349C575 348 588 353 603 359C645 377 690 398 728 412C750 421 775 431 800 440C840 453 890 468 938 482C970 491 987 510 987 530C987 542 983 550 979 557L950 618L934 662C922 684 893 697 867 697C845 697 835 694 820 688C760 665 700 638 640 615C600 600 570 589 540 580L485 565C455 552 436 527 436 508C436 502 438 498 442 493L503 382C515 360 530 351 557 349Z"/>
                    <path id="floor" d="M575 450C567 447 557 447 549 456C545 460 543 463 541 467L492 547C487 555 489 560 500 564C550 577 590 590 640 608C710 635 780 665 840 690C850 694 860 694 867 690C875 685 890 658 900 640L928 595C930 586 928 580 920 576C880 565 840 555 807 545C750 527 690 502 637 478Z"/>
                    <clipPath id="cavity"><use href="#rim"/></clipPath>
                    <g id="slot">
                        <path d="M9 9L62 26" stroke="#1d2f0c" stroke-width="17"/>
                        <path d="M9 12L61 28" stroke="#d6d7dd" stroke-width="13"/>
                    </g>
                    <g id="hole">
                        <ellipse rx="15" ry="11" fill="#1f300e"/>
                        <ellipse cy="2" rx="14" ry="9" fill="#cfcfd4"/>
                    </g>
                </defs>

                <text x="628" y="637" class="axis yc">YC</text>
                <!-- outer flange -->
                <path d="M527 338C552 324 580 317 610 317C640 317 665 324 700 341C755 367 812 387 867 404C900 413 925 419 945 428C985 445 1011 482 1011 517C1010 535 1003 550 990 577L941 676C925 700 893 716 857 715C836 714 825 707 810 701C755 677 720 662 693 652C640 629 590 613 540 599C510 590 490 584 480 580C440 566 417 540 417 517C417 505 421 498 427 490L488 377C497 360 510 346 527 338Z" fill="#5f9b22" stroke="#22380e"/>
                <path d="M420 506C413 535 445 564 480 575C515 585 560 598 620 619C690 646 750 670 815 697C850 716 915 712 938 674L1007 540" fill="none" stroke="#2f4d14"/>
                <path d="M480 579C560 602 640 628 693 650C740 668 780 687 815 702C850 716 900 714 930 689" fill="none" stroke="#2f5012" stroke-width="3"/>

                <!-- cavity walls -->
                <use href="#rim" fill="#5c9722"/>
                <g clip-path="url(#cavity)" fill="none" stroke-linecap="round" stroke-linejoin="round">
                    <path d="M520 395L452 512" stroke="#335a12" stroke-width="16" filter="url(#soft)"/>
                    <path d="M540 388C555 374 580 378 610 391C650 412 700 439 740 454C800 473 860 495 915 509C950 513 966 527 966 550" stroke="#1b2c09" stroke-width="34" filter="url(#soft)"/>
                    <path d="M600 388C650 414 700 440 740 452C800 472 860 494 915 509" stroke="#1c2a0d" stroke-width="18" filter="url(#soft)"/>
                    <path d="M950 612L918 660" stroke="#38620f" stroke-width="8" filter="url(#soft)"/>
                    <path d="M543 435L473 545" stroke="#76b235" stroke-width="20" filter="url(#soft)"/>
                    <path d="M555 432C610 436 660 476 710 492C780 519 850 544 940 567" stroke="#6fa838" stroke-width="20" filter="url(#soft)"/>
                    <ellipse cx="545" cy="434" rx="14" ry="11" fill="#86c544" filter="url(#soft)"/>
                    <ellipse cx="943" cy="566" rx="14" ry="13" fill="#7ab13f" filter="url(#soft)"/>
                    <path d="M443 500L508 388C520 365 538 357 560 356C600 358 650 390 728 419C800 447 870 467 938 488C968 497 982 515 981 534L945 615" stroke="#72a936" stroke-width="9" filter="url(#fine)"/>
                    <path d="M441 504C438 530 465 555 490 562" stroke="#69a128" stroke-width="12" filter="url(#fine)"/>
                </g>
                <use href="#floor" fill="#5f9b22" stroke="#2d4a12"/>
                <use href="#rim" fill="none" stroke="#2d4a12"/>

                <!-- face edges -->
                <g fill="none" stroke="#2d4a12">
                    <path d="M527 338L557 349V364L558 375M603 359L601 367M503 382L513 387M457 437L478 446M427 490L450 499M730 415L728 422M801 440L798 449M938 482L937 492M978 504L971 511M978 504L1011 517M979 557L971 558M950 618L941 616M950 618L963 626M915 670L931 676M867 690L881 691M485 565L486 562"/>
                    <path d="M513 387C510 430 530 447 550 454M596 400C595 420 588 432 574 450M932 525C932 545 927 560 921 577M928 594C935 597 943 597 951 596M453 506C455 525 470 538 490 547"/>
                </g>

                <g stroke-linecap="round">
                    <use href="#slot" x="574" y="516"/>
                    <use href="#slot" x="642" y="502"/>
                    <use href="#slot" x="747" y="541"/>
                    <use href="#slot" x="675" y="554"/>
                    <use href="#slot" x="601" y="566"/>
                    <use href="#slot" x="776" y="591"/>
                    <use href="#slot" x="706" y="604"/>
                </g>
                <use href="#hole" x="719" y="373"/>
                <use href="#hole" x="854" y="423"/>

                <!-- work coordinate system -->
                <text x="569" y="654" class="axis xc">XC</text>
                <text x="621" y="725" class="axis zc">ZC</text>
                <path d="M569 659L590 662L617 677L583 668Z" fill="#d83a3a"/>
                <path d="M576 663L617 677L583 668Z" fill="#8c2020"/>
                <path d="M644 642L629 656L621 676L638 658Z" fill="#3fa54a"/>
                <path d="M644 642L621 676L638 658Z" fill="#25702e"/>
                <path d="M620 681L622 702L618 716L616 702Z" fill="#0b2c9c"/>
            </svg>
        </div>
    </main>

    <script>
        // fill the rest of the navigator with blank rows
        const parts = document.getElementById('parts');
        for (let i = 0; i < 60; i++) {
            const row = parts.insertRow();
            for (let c = 0; c < 4; c++) {
                row.insertCell();
            }
        }
    </script>
</body>
</html>
```
FILE: styles.css
```css
* {
    box-sizing: border-box;
    margin: 0;
    padding: 0;
}

body {
    display: flex;
    flex-direction: column;
    height: 100vh;
    overflow: hidden;
    background: #fff;
    color: #111;
    font-family: "Noto Sans", "Noto Sans CJK SC", sans-serif;
    font-size: 11px;
    line-height: 16px;
}

button, select, input {
    font: inherit;
    color: inherit;
}

button {
    display: flex;
    align-items: center;
    background: none;
    border: none;
    white-space: nowrap;
    cursor: pointer;
}

svg {
    flex: none;
    width: 16px;
    height: 16px;
}

.sprite {
    display: none;
}

.caret {
    flex: none;
    width: 6px;
    height: 3px;
    background: #111;
    clip-path: polygon(0 0, 100% 0, 50% 100%);
}

.caret.up {
    background: #999;
    clip-path: polygon(50% 0, 100% 100%, 0 100%);
}

.caret.bar {
    height: 6px;
    clip-path: polygon(0 0, 100% 0, 100% 1px, 0 1px, 0 3px, 100% 3px, 50% 100%, 0 3px);
}

/* title bar, scrolled partly out of the window */
.titlebar {
    display: flex;
    flex: none;
    align-items: flex-end;
    gap: 7px;
    height: 14px;
    padding: 0 0 5px 4px;
    overflow: hidden;
    font-size: 12px;
}

.logo {
    width: 39px;
    color: #a3adae;
    font-size: 22px;
    font-weight: bold;
    line-height: 20px;
}

.quick {
    gap: 6px;
    padding: 0 1px;
}

.quick-window {
    gap: 5px;
}

.quick-sep {
    width: 1px;
    height: 24px;
    background: #ccc;
}

.doc-title {
    flex: 0 0 219px;
    margin-left: auto;
    overflow: hidden;
    white-space: nowrap;
}

.tabs {
    display: flex;
    flex: none;
    height: 28px;
    background: #ccd7d5;
    font-size: 13px;
}

.tab {
    justify-content: center;
    padding: 0 13px;
}

.tab.file {
    width: 81px;
    margin-right: 2px;
    background: #4f8383;
    color: #fff;
}

.tab.active {
    background: #fff;
    border-top: 1px solid #b7c4c2;
    color: #2f7f9e;
}

/* ribbon */
.ribbon {
    display: flex;
    flex: none;
    overflow: hidden;
    border-bottom: 1px solid #c4cbc9;
}

.group {
    display: flex;
    flex: none;
    flex-direction: column;
    border-left: 1px solid #c9d1cf;
}

.group-window {
    border-left: none;
    width: 49px;
}

.group-body {
    display: flex;
    height: 76px;
    padding-top: 2px;
}

.group-title {
    display: flex;
    height: 17px;
    color: #2d7d9f;
    white-space: nowrap;
}

.group-title span {
    flex: 1;
    text-align: center;
}

.group-title button {
    justify-content: center;
    width: 20px;
    margin-right: 1px;
}

.big {
    flex-direction: column;
    padding: 3px 4px 0;
}

.big svg {
    width: 32px;
    height: 32px;
    margin-bottom: 4px;
}

.big .caret {
    margin-top: 5px;
}

.group-window .big {
    padding-left: 10px;
}

.more {
    padding: 2px 0 0;
}

.more-box {
    display: grid;
    place-items: center;
    width: 38px;
    height: 35px;
    margin-bottom: 2px;
    border: 1px dotted #ccc;
}

.more-box svg {
    width: 18px;
    height: 18px;
    margin: 0;
}

.icon-grid {
    display: grid;
    grid-template-rows: repeat(3, 22px);
    column-gap: 3px;
}

.icon-grid.three {
    grid-template-columns: repeat(3, 22px);
}

.icon-grid.two {
    grid-template-columns: repeat(2, 22px);
}

.icon-grid button, .std-grid button {
    justify-content: center;
}

.group-orient .group-body {
    padding-left: 9px;
    padding-right: 4px;
}

.group-orient .two {
    margin: 0 8px 0 17px;
}

.group-visible .group-body {
    padding-left: 8px;
    padding-right: 4px;
}

.gallery {
    width: 115px;
    height: 66px;
    margin: 3px 0 0 8px;
    border: 1px solid #c5cfca;
}

.gallery button {
    gap: 4px;
    width: 100%;
    height: 21px;
    padding-left: 2px;
}

.gallery-scroll {
    display: grid;
    grid-template-rows: repeat(3, 22px);
    width: 18px;
    margin-right: 10px;
    padding-top: 2px;
}

.gallery-scroll button {
    justify-content: center;
}

.layer-tools {
    padding-top: 4px;
    margin-right: 5px;
}

.layer-tools button {
    gap: 4px;
    height: 22px;
}

select {
    appearance: none;
    height: 20px;
    padding: 0 20px 0 3px;
    border: 1px solid #9aa59f;
    border-radius: 0;
    background: #fff url("data:image/svg+xml,%3Csvg xmlns='http://www.w3.org/2000/svg' width='8' height='4'%3E%3Cpath d='M0 0h8L4 4z'/%3E%3C/svg%3E") no-repeat right 5px center;
}

.layer-tools select {
    display: block;
    width: 49px;
    margin-bottom: 3px;
}

.group-visible .more {
    margin-left: 9px;
}

.group-style .group-body {
    padding: 2px 8px 0 9px;
}

.group-visual .group-body {
    padding: 2px 9px 0 8px;
}

.png {
    display: flex;
    flex-direction: column;
    align-items: center;
    height: 36px;
    color: #46466e;
    font-size: 14px;
    font-weight: bold;
}

.png i {
    width: 8px;
    height: 13px;
    margin: 2px 0 0 24px;
    background: #b0399b;
    clip-path: polygon(0 0, 100% 50%, 0 100%);
}

.group-std {
    width: 104px;
}

.std-grid {
    display: grid;
    grid-template: repeat(2, 22px) / repeat(3, 23px);
    row-gap: 7px;
    align-content: start;
    padding: 8px 3px 0 4px;
}

.std-grid.single {
    grid-template-columns: 26px;
    height: 52px;
    margin-top: 8px;
    padding: 0;
    border-left: 1px solid #ccc;
}

.group-rest {
    padding-left: 2px;
}

/* selection bar */
.toolbar {
    display: flex;
    flex: none;
    align-items: center;
    height: 32px;
    padding-left: 10px;
    border-bottom: 1px solid #80888c;
}

.menu-button svg {
    margin-right: 4px;
}

.menu-button .caret {
    margin: 0 2px 0 5px;
}

.sep {
    flex: none;
    width: 1px;
    height: 22px;
    margin: 0 3px 0 4px;
    background: #c5cccb;
}

.filter {
    width: 134px;
    margin: 0 8px;
}

.scope {
    width: 140px;
    margin-right: 10px;
}

.tools {
    display: flex;
    align-items: center;
    gap: 8px;
}

.tools button {
    gap: 6px;
}

.tools .pressed {
    justify-content: center;
    width: 22px;
    height: 22px;
    background: #c7d3d0;
    border: 1px solid #98a9a5;
}

.workspace {
    display: flex;
    flex: 1;
    min-height: 0;
}

.sidebar {
    flex: none;
    width: 33px;
    overflow: hidden;
    background: #d3d3d3;
    border-right: 1px solid #a5aaa9;
}

.sidebar button {
    justify-content: center;
    width: 100%;
    height: 42px;
    padding-left: 4px;
}

.sidebar svg {
    width: 24px;
    height: 24px;
}

.sidebar .settings {
    height: 26px;
    margin-bottom: 15px;
    padding-left: 0;
}

.sidebar .settings svg {
    width: 14px;
    height: 14px;
}

.sidebar .current {
    width: 31px;
    height: 44px;
    margin-left: 2px;
    padding-left: 1px;
    background: #fff;
    border: 1px solid #aab0ae;
    border-right: none;
}

.sidebar .spaced {
    margin-top: 12px;
}

/* assembly navigator */
.navigator {
    display: flex;
    flex: none;
    flex-direction: column;
    width: 331px;
    padding: 0 9px 0 5px;
    border-right: 1px solid #9c9c9c;
    font-size: 12px;
}

.navigator-title {
    display: flex;
    align-items: center;
    justify-content: space-between;
    height: 29px;
    padding: 0 7px 0 4px;
}

.navigator-title button {
    width: 12px;
    height: 11px;
    border: 1px solid #111;
    border-top-width: 2px;
}

.table-wrap {
    flex: 1;
    overflow: hidden;
    border-left: 1px solid #c3ccc8;
}

table {
    width: 100%;
    table-layout: fixed;
    border-collapse: separate;
    border-spacing: 0;
}

.c-info {
    width: 36px;
}

.c-flag {
    width: 24px;
}

th {
    height: 22px;
    background: #ececed;
    border: 1px solid #cdd3d1;
    border-left: none;
    font-weight: normal;
}

th:first-child {
    padding-left: 7px;
    text-align: left;
}

td {
    height: 20px;
    border-right: 1px solid #e2e6e4;
    border-bottom: 1px solid #dfe3e1;
}

td:first-child {
    border-right-color: #111;
}

tbody tr:nth-child(even) {
    background: #fafafa;
}

.node {
    display: flex;
    align-items: center;
    height: 19px;
}

.node::before {
    content: "";
    width: 10px;
    height: 10px;
    margin-left: 10px;
    border-left: 1px dotted #888;
}

.section-node::before {
    align-self: flex-end;
    border-top: 1px dotted #888;
}

.section-node svg {
    margin-right: 3px;
}

.part-node::before {
    align-self: flex-start;
    border-bottom: 1px dotted #888;
}

.part-node svg {
    width: 14px;
    height: 14px;
    margin: 0 2px 0 4px;
}

.part-node label {
    font-weight: bold;
}

.node input {
    appearance: none;
    width: 12px;
    height: 12px;
    margin-left: 2px;
    border: 1px solid #222;
    background: #fff;
}

.node input:checked {
    background: #fff url("data:image/svg+xml,%3Csvg xmlns='http://www.w3.org/2000/svg' width='10' height='10'%3E%3Cpath d='M1 4l3 4 5-7' fill='none' stroke='%23d01c28' stroke-width='2'/%3E%3C/svg%3E") no-repeat center;
}

.flag svg {
    display: block;
    width: 14px;
    height: 14px;
    margin: 0 auto;
}

.viewport {
    flex: 1;
    min-width: 0;
    overflow: hidden;
    border-top: 1px solid #cfa376;
    border-left: 1px solid #cfa376;
    background: linear-gradient(#b1b1b3, #cfcfd2 45%, #e2e1ea 85%, #e6e6f2);
}

.viewport svg {
    display: block;
    width: 100%;
    height: 100%;
}

.axis {
    font-size: 12px;
}

.xc {
    fill: #c93a3a;
}

.yc {
    fill: #3a8c44;
}

.zc {
    fill: #2244b4;
}
```
